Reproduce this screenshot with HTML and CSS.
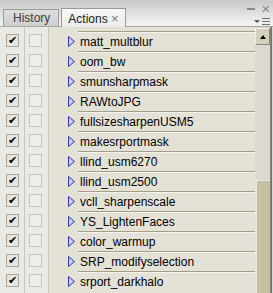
FILE: index.html
```html
<!DOCTYPE html>
<html lang="en">
  <head>
    <meta charset="UTF-8">
    <title>Actions</title>
    <link rel="stylesheet" href="styles.css">
  </head>
  <body>
    <div class="panel">
      <div class="header">
        <div class="tabs">
          <div class="tab">History</div>
          <div class="tab active">Actions <span class="tab-close">&#215;</span></div>
        </div>
        <div class="controls">
          <div class="win-buttons"><span class="min"></span><span class="close">&#215;</span></div>
          <div class="menu"><span class="menu-arrow"></span><span class="menu-lines"></span></div>
        </div>
      </div>
      <div class="body">
        <div class="list" id="list"></div>
        <div class="scrollbar">
          <div class="arrow-up"><span></span></div>
          <div class="track"></div>
          <div class="thumb"></div>
        </div>
        <div class="edge"></div>
      </div>
    </div>
    <script>
      const actions = [
        "matt_multblur", "oom_bw", "smunsharpmask", "RAWtoJPG",
        "fullsizesharpenUSM5", "makesrportmask", "llind_usm6270",
        "llind_usm2500", "vcll_sharpenscale", "YS_LightenFaces",
        "color_warmup", "SRP_modifyselection", "srport_darkhalo"
      ];
      const tri = '<svg class="tri" width="7" height="11" viewBox="0 0 7 11">' +
        '<polygon points="0.5,0.5 6.5,5.5 0.5,10.5" fill="#c9c9f2" stroke="#2b3c9e" stroke-width="1"/></svg>';
      const list = document.getElementById("list");
      for (const name of actions) {
        const row = document.createElement("div");
        row.className = "row";
        row.innerHTML =
          '<div class="col"><span class="check on">&#10004;</span></div>' +
          '<div class="col"><span class="check"></span></div>' +
          '<div class="expander">' + tri + '</div>' +
          '<div class="name">' + name + '</div>';
        list.appendChild(row);
      }
    </script>
  </body>
</html>
```

FILE: styles.css
```css
html, body {
  margin: 0;
  padding: 0;
}

body {
  background: #ffffff;
  font-family: "Liberation Sans", Arial, sans-serif;
  font-size: 12px;
  color: #000000;
}

.panel {
  width: 273px;
  height: 293px;
  overflow: hidden;
  display: flex;
  flex-direction: column;
}

.header {
  height: 26px;
  flex: none;
  display: flex;
  justify-content: space-between;
  background: linear-gradient(#c9c9c9, #e4e4e4 60%, #f4f4f4);
  border-bottom: 1px solid #a8a8a0;
}

.tabs {
  display: flex;
  align-items: flex-end;
  padding-left: 3px;
  gap: 2px;
}

.tab {
  height: 16px;
  padding: 0 8px 0 9px;
  line-height: 16px;
  color: #404040;
  background: linear-gradient(#dedede, #cfcfcf);
  border: 1px solid #9a9a9a;
  border-bottom: none;
}

.tab.active {
  height: 18px;
  line-height: 20px;
  padding: 0 6px;
  color: #202020;
  background: linear-gradient(#f6f6f6, #ececec);
  margin-bottom: -1px;
}

.tab-close {
  color: #7a7a7a;
  font-size: 13px;
}

.controls {
  display: flex;
  flex-direction: column;
  justify-content: space-between;
  align-items: flex-end;
  padding: 3px 3px 1px 0;
}

.win-buttons {
  display: flex;
  align-items: center;
  gap: 6px;
}

.min {
  width: 8px;
  height: 2px;
  background: #8a8a8a;
}

.close {
  color: #8a8a8a;
  font-size: 15px;
  line-height: 12px;
}

.menu {
  display: flex;
  align-items: center;
  gap: 2px;
}

.menu-arrow {
  width: 0;
  height: 0;
  border-left: 3px solid transparent;
  border-right: 3px solid transparent;
  border-top: 3px solid #606060;
}

.menu-lines {
  width: 8px;
  height: 1px;
  background: #707070;
  box-shadow: 0 3px 0 #707070, 0 -3px 0 #707070;
  margin: 3px 0;
}

.body {
  flex: 1;
  display: flex;
  background: #e4e2d6;
}

.list {
  flex: 1;
  padding-top: 4px;
  background: linear-gradient(90deg, #eae9e3 0, #eae9e3 24px, #c8c6bc 24px, #c8c6bc 25px, #eae9e3 25px, #eae9e3 48px, #c8c6bc 48px, #c8c6bc 49px, transparent 49px);
}

.row {
  height: 20px;
  display: grid;
  grid-template-columns: 24px 24px 30px 1fr;
}

.col {
  display: flex;
  align-items: flex-start;
  padding: 3px 0 0 6px;
}

.col + .col {
  padding-left: 5px;
}

.check {
  width: 11px;
  height: 11px;
  border: 1px solid #c4c4bc;
  background: #eeeee8;
  font-size: 11px;
  line-height: 11px;
  text-align: center;
  color: #000000;
}

.check.on {
  border-color: #a8a8a0;
  background: #e6e6e0;
}

.expander {
  padding: 5px 0 0 20px;
}

.tri {
  display: block;
}

.name {
  border-top: 1px solid #a29e88;
  box-shadow: inset 0 1px 0 #f4f3ec;
  padding: 3px 0 0 2px;
  white-space: nowrap;
  overflow: hidden;
}

.scrollbar {
  width: 15px;
  position: relative;
  background: #dcdace;
}

.arrow-up {
  height: 15px;
  margin-top: 1px;
  background: #d4d0bc;
  border: 1px solid;
  border-color: #f2f0e6 #8a8676 #8a8676 #f2f0e6;
  display: flex;
  align-items: center;
  justify-content: center;
}

.arrow-up span {
  width: 0;
  height: 0;
  border-left: 3px solid transparent;
  border-right: 3px solid transparent;
  border-bottom: 4px solid #000000;
}

.thumb {
  position: absolute;
  left: 0;
  right: 0;
  top: 153px;
  bottom: 0;
  background: #c4c0a2;
  border-left: 2px solid #e8e6da;
  border-top: 1px solid #e8e6da;
}

.edge {
  width: 3px;
  background: linear-gradient(90deg, #8c8c8c 0, #6a6a6a 2px, #d8d8d8 2px);
}
```
